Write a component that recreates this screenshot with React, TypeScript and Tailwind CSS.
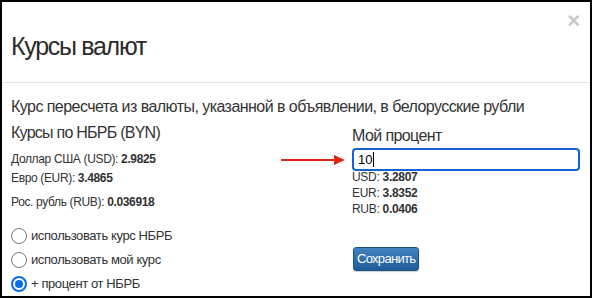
import React from 'react'

const font = { fontFamily: '"Liberation Sans", Arial, sans-serif' }

export default function App() {
  return (
    <div className="relative h-[298px] w-[592px] overflow-hidden border-2 border-black bg-white text-[#333]" style={font}>
      {/* Header */}
      <div className="relative h-[81px] border-b border-[#e5e5e5] pl-[9px] pt-[29px]">
        <h1 className="text-[25px] leading-[30px] tracking-[-1.3px] text-[#2b2b2b]">Курсы валют</h1>
        <span className="absolute right-[10px] top-[6px] text-[22px] font-bold leading-[26px] text-[#c8c8c8]">×</span>
      </div>

      {/* Body */}
      <div className="pl-[9px] pr-[10px] pt-[14px]">
        <p className="text-[16px] leading-[20px] tracking-[-0.55px]">Курс пересчета из валюты, указанной в объявлении, в белорусские рубли</p>
        <div className="mt-[6px] flex">
          <div className="w-[343px]">
            <p className="text-[16px] leading-[20px] tracking-[-0.75px]">Курсы по НБРБ (BYN)</p>
            <div className="mt-[8px] space-y-[3px] text-[12px] leading-[16px] tracking-[-0.35px]">
              <p>Доллар США (USD): <b>2.9825</b></p>
              <p>Евро (EUR): <b>3.4865</b></p>
              <p className="pt-[5px]">Рос. рубль (RUB): <b>0.036918</b></p>
            </div>
            <div className="mt-[17px] space-y-[6px] text-[13px] leading-[18px] tracking-[-0.4px]">
              <label className="flex items-center gap-[4px]">
                <span className="h-[16px] w-[16px] rounded-full border border-[#767676] bg-white" />
                использовать курс НБРБ
              </label>
              <label className="flex items-center gap-[4px]">
                <span className="h-[16px] w-[16px] rounded-full border border-[#767676] bg-white" />
                использовать мой курс
              </label>
              <label className="flex items-center gap-[4px]">
                <span className="flex h-[16px] w-[16px] items-center justify-center rounded-full border-2 border-[#0b6bf0] bg-white">
                  <span className="h-[8px] w-[8px] rounded-full bg-[#0b6bf0]" />
                </span>
                + процент от НБРБ
              </label>
            </div>
          </div>
          <div className="flex-1">
            <p className="pt-[3px] text-[16px] leading-[20px] tracking-[-0.6px]">Мой процент</p>
            <div className="mt-[2px] flex h-[23px] w-[228px] items-center rounded-[4px] border-2 border-[#1662d3] pl-[4px] text-[13px] text-black">
              10<span className="ml-[1px] inline-block h-[15px] w-px bg-black" />
            </div>
            <div className="mt-[-2px] text-[12px] leading-[16px] tracking-[-0.3px]">
              <p>USD: <b>3.2807</b></p>
              <p>EUR: <b>3.8352</b></p>
              <p>RUB: <b>0.0406</b></p>
            </div>
            <button className="ml-[1px] mt-[30px] h-[24px] rounded-[3px] border border-[#1d4f85] bg-gradient-to-b from-[#3f82c2] to-[#1f5c98] px-[3px] text-[13px] leading-[20px] tracking-[-0.7px] text-white shadow-[0_1px_1px_rgba(0,0,0,0.2)]">
              Сохранить
            </button>
          </div>
        </div>
      </div>

      {/* Annotation arrow */}
      <svg className="absolute left-[278px] top-[152px]" width="66" height="12" viewBox="0 0 66 12">
        <line x1="1" y1="6" x2="56" y2="6" stroke="#e2231a" strokeWidth="2" />
        <polygon points="54,1 65,6 54,11" fill="#e2231a" />
      </svg>
    </div>
  )
}
